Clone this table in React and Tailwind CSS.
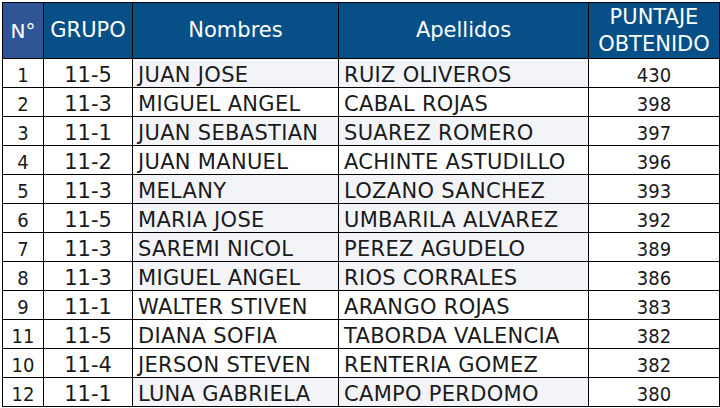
import React from 'react';

const rows = [
  { n: '1', grupo: '11-5', nombres: 'JUAN JOSE', apellidos: 'RUIZ OLIVEROS', puntaje: '430', shade: true },
  { n: '2', grupo: '11-3', nombres: 'MIGUEL ANGEL', apellidos: 'CABAL ROJAS', puntaje: '398', shade: false },
  { n: '3', grupo: '11-1', nombres: 'JUAN SEBASTIAN', apellidos: 'SUAREZ ROMERO', puntaje: '397', shade: true },
  { n: '4', grupo: '11-2', nombres: 'JUAN MANUEL', apellidos: 'ACHINTE ASTUDILLO', puntaje: '396', shade: false },
  { n: '5', grupo: '11-3', nombres: 'MELANY', apellidos: 'LOZANO SANCHEZ', puntaje: '393', shade: true },
  { n: '6', grupo: '11-5', nombres: 'MARIA JOSE', apellidos: 'UMBARILA ALVAREZ', puntaje: '392', shade: true },
  { n: '7', grupo: '11-3', nombres: 'SAREMI NICOL', apellidos: 'PEREZ AGUDELO', puntaje: '389', shade: true },
  { n: '8', grupo: '11-3', nombres: 'MIGUEL ANGEL', apellidos: 'RIOS CORRALES', puntaje: '386', shade: true },
  { n: '9', grupo: '11-1', nombres: 'WALTER STIVEN', apellidos: 'ARANGO ROJAS', puntaje: '383', shade: false },
  { n: '11', grupo: '11-5', nombres: 'DIANA SOFIA', apellidos: 'TABORDA VALENCIA', puntaje: '382', shade: false },
  { n: '10', grupo: '11-4', nombres: 'JERSON STEVEN', apellidos: 'RENTERIA GOMEZ', puntaje: '382', shade: false },
  { n: '12', grupo: '11-1', nombres: 'LUNA GABRIELA', apellidos: 'CAMPO PERDOMO', puntaje: '380', shade: true },
];

const sans = { fontFamily: "'DejaVu Sans', sans-serif" };
const narrow = { fontFamily: "'DejaVu Sans Condensed', 'DejaVu Sans', sans-serif" };

const App = () => {
  return (
    <div className="w-[720px] h-[408px] bg-white overflow-hidden pt-[2px] pl-[2px]">
      <table className="border-collapse table-fixed w-[717px] text-[21px] text-[#1a1a1a]" style={sans}>
        <colgroup>
          <col className="w-[41px]" />
          <col className="w-[89px]" />
          <col className="w-[206px]" />
          <col className="w-[250px]" />
          <col className="w-[131px]" />
        </colgroup>
        <thead>
          <tr className="h-[55px] text-white">
            <th className="border border-black bg-[#2f5597] font-normal text-center p-0 text-[20px]">N°</th>
            <th className="border border-black bg-[#074f87] font-normal text-center p-0">GRUPO</th>
            <th className="border border-black bg-[#074f87] font-normal text-center p-0">Nombres</th>
            <th className="border border-black bg-[#074f87] font-normal text-center p-0">Apellidos</th>
            <th className="border border-black bg-[#074f87] font-normal text-center p-0 pt-[1px] leading-[27px]">
              PUNTAJE<br />OBTENIDO
            </th>
          </tr>
        </thead>
        <tbody>
          {rows.map((row, i) => (
            <tr key={i} className="h-[29px]">
              <td className="border border-black text-center p-0 pt-[3px] leading-[24px] text-[20px]" style={narrow}>
                {row.n}
              </td>
              <td className="border border-black text-center p-0 pt-[3px] leading-[24px]">{row.grupo}</td>
              <td className={`border border-black pl-[5px] pr-0 pt-[3px] pb-0 leading-[24px] tracking-[0.3px] whitespace-nowrap ${row.shade ? 'bg-[#f3f4f8]' : 'bg-white'}`}>
                {row.nombres}
              </td>
              <td className={`border border-black pl-[5px] pr-0 pt-[3px] pb-0 leading-[24px] tracking-[0.3px] whitespace-nowrap ${row.shade ? 'bg-[#f3f4f8]' : 'bg-white'}`}>
                {row.apellidos}
              </td>
              <td className="border border-black text-center p-0 pt-[3px] leading-[24px] text-[20px]" style={narrow}>
                {row.puntaje}
              </td>
            </tr>
          ))}
        </tbody>
      </table>
    </div>
  );
};

export default App;
